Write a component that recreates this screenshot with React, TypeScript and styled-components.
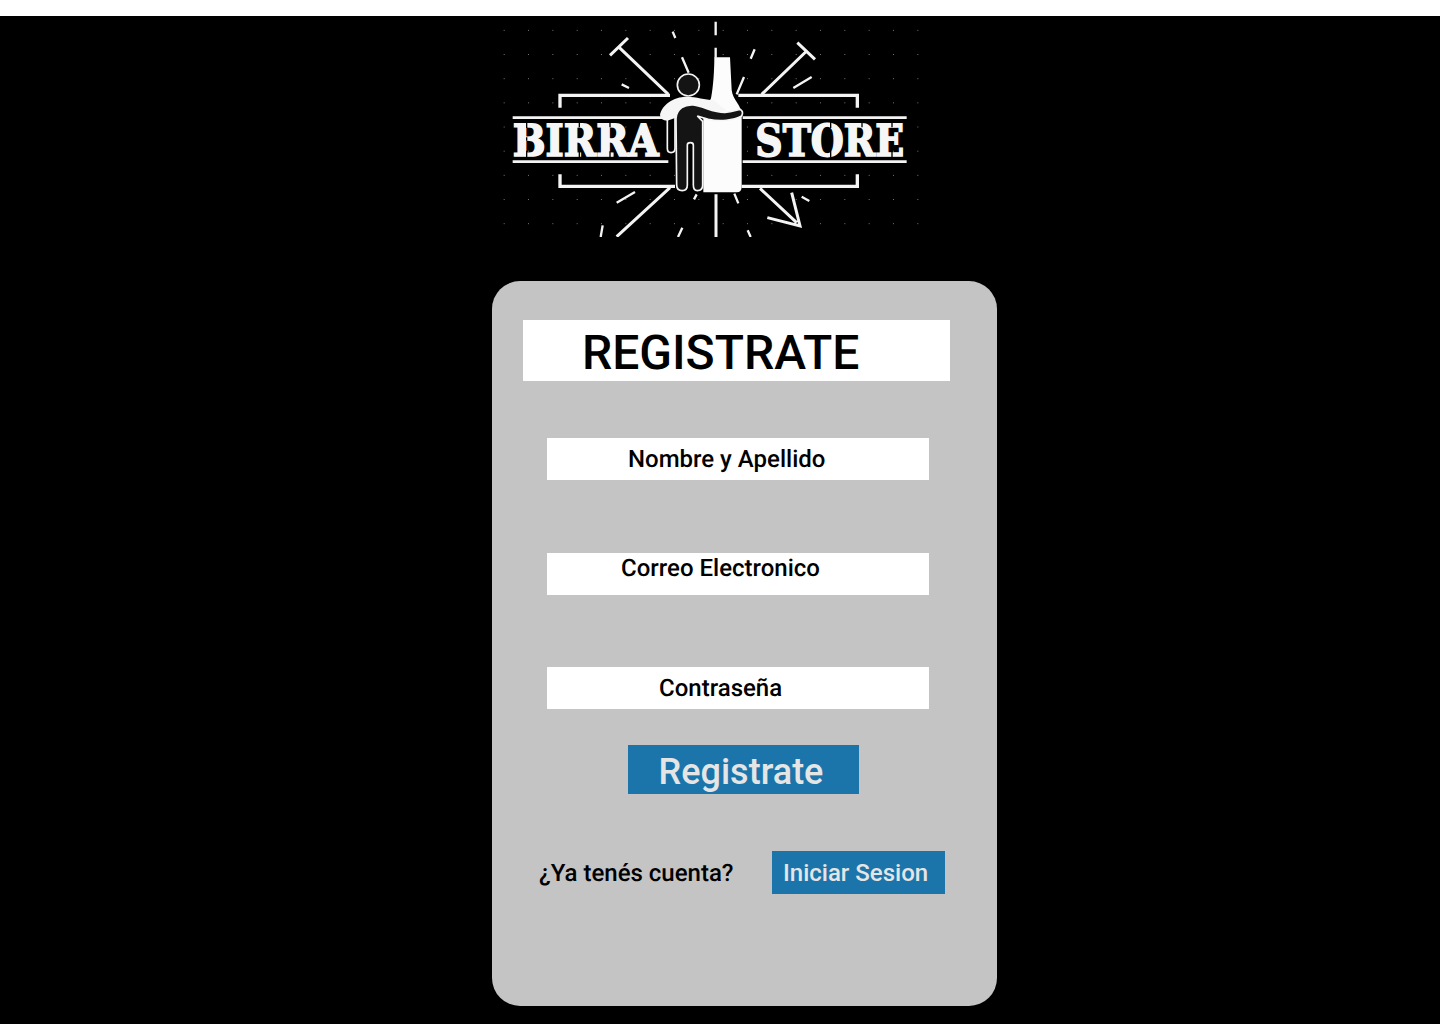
import styled, { createGlobalStyle } from "styled-components";

const GlobalStyle = createGlobalStyle`
  html, body {
    margin: 0;
    padding: 0;
    background: #fff;
    font-family: Roboto, "Liberation Sans", sans-serif;
    text-rendering: geometricPrecision;
  }
`;

function Logo() {
  return (
    <LogoSvg viewBox="0 0 1260 663" role="img" aria-label="Birra Store">
      <defs>
        <pattern id="dots" width="73" height="72.5" patternUnits="userSpaceOnUse" x="-59" y="-28">
          <rect x="70" y="70" width="3" height="3" fill="#8a8a8a" />
        </pattern>
      </defs>
      <rect width="1260" height="663" fill="url(#dots)" />

      <g stroke="#f4f4f4" strokeWidth="7" fill="none">
        <path d="M647 17V58M647 95V125M518 47L526 66M546 124L566 170M764 100L752 128M732 183L710 235" />
        <path d="M355 92L505 235M330 118L384 66M920 105L785 235M892 80L945 130" strokeWidth="9" />
        <path d="M365 205L387 216M880 216L935 183" />
        <path d="M180 275V238H510M715 238H1072V275M180 475V511H525M725 511H1072V475" strokeWidth="10" />
        <path d="M350 560L405 528M308 628L302 663M547 635L534 663M590 535L582 550M703 533L715 562M743 643L752 663M905 542L928 555" />
        <path d="M510 515L350 662M648 535V663M780 517L890 620M875 530L900 630L802 605" strokeWidth="9" />
        <path d="M38 305H505M728 305H1220M38 437H505M728 437H1220" strokeWidth="8" />
      </g>

      <StencilText transform="translate(38 419) scale(0.885 1)">BIRRA</StencilText>
      <StencilText transform="translate(766 419) scale(0.86 1)">STORE</StencilText>
      {/* stencil bridges cut through the letters */}
      <path
        d="M80 318V336M80 404V424M80 364V374M238 318V334M238 406V424M330 318V334M330 406V424
           M992 318V336M992 404V424M1086 318V334M1086 406V424M1176 318V334M1176 406V424"
        stroke="#000"
        strokeWidth="4"
        fill="none"
      />

      <g transform="translate(450 102)">
        {/* bottle */}
        <path
          d="M193 22H240L245 120C248 150 275 165 275 195V410Q275 427 260 427H160V190L183 145C190 110 193 60 193 22Z"
          fill="#fcfcfc"
        />
        {/* hanging arm */}
        <path d="M52 205V295Q52 308 63 308Q75 308 75 295V195" fill="#000" stroke="#f6f6f6" strokeWidth="5" />
        {/* shoulder */}
        <path
          d="M30 195C35 165 70 140 110 140C140 140 165 150 190 150L230 182L100 195L52 212Q32 212 30 195Z"
          fill="#f6f6f6"
        />
        {/* head */}
        <circle cx="115" cy="105" r="33" fill="#141414" stroke="#f4f4f4" strokeWidth="5" />
        {/* body and arm round the bottle */}
        <path
          d="M78 205C80 175 105 163 130 165C165 170 190 188 225 187C245 186 260 180 270 178Q282 185 275 198C250 212 210 215 175 208L142 198L158 214V405Q158 422 142 422Q130 422 130 405V285Q130 278 121 278Q112 278 112 285V405Q112 422 97 422Q80 422 80 405Z"
          fill="#141414"
          stroke="#f6f6f6"
          strokeWidth="5"
        />
      </g>
    </LogoSvg>
  );
}

export default function App() {
  return (
    <Page>
      <GlobalStyle />
      <Logo />
      <Card>
        <TitleBox>
          <Title>REGISTRATE</Title>
        </TitleBox>
        <Fields>
          <Field $indent={81}>Nombre y Apellido</Field>
          <Field $indent={74} $raised>
            Correo Electronico
          </Field>
          <Field $indent={112}>Contraseña</Field>
        </Fields>
        <RegisterButton>Registrate</RegisterButton>
        <LoginRow>
          <LoginText>¿Ya tenés cuenta?</LoginText>
          <LoginButton>Iniciar Sesion</LoginButton>
        </LoginRow>
      </Card>
    </Page>
  );
}

const Page = styled.main`
  box-sizing: border-box;
  margin-top: 16px;
  height: 1008px;
  padding-left: 492px;
  background: #000;
  overflow: hidden;
`;

const LogoSvg = styled.svg`
  display: block;
  width: 420px;
  height: 221px;
  margin-left: 8px;
`;

const StencilText = styled.text`
  font-family: "DejaVu Serif", "Liberation Serif", serif;
  font-size: 132px;
  font-weight: 700;
  fill: #f6f6f6;
  stroke: #f6f6f6;
  stroke-width: 5px;
`;

const Card = styled.section`
  box-sizing: border-box;
  width: 505px;
  height: 725px;
  margin-top: 44px;
  padding: 39px 0 0 31px;
  background: #c4c4c4;
  border-radius: 28px;
  color: #000;
`;

const TitleBox = styled.div`
  box-sizing: border-box;
  width: 427px;
  height: 61px;
  padding-left: 59px;
  background: #fff;
`;

const Title = styled.h1`
  margin: 0;
  font-size: 48px;
  font-weight: 500;
  line-height: 66px;
`;

const Fields = styled.div`
  display: flex;
  flex-direction: column;
  gap: 72.5px;
  margin: 57px 0 0 24px;
`;

const Field = styled.div<{ $indent: number; $raised?: boolean }>`
  box-sizing: border-box;
  width: 382px;
  height: 42px;
  padding-left: ${(p) => p.$indent}px;
  background: #fff;
  font-size: 24px;
  font-weight: 500;
  line-height: ${(p) => (p.$raised ? "30px" : "42px")};
`;

const RegisterButton = styled.button`
  display: block;
  width: 231px;
  height: 49px;
  margin: 36px 0 0 105px;
  padding: 6px 5px 0 0;
  border: 0;
  border-radius: 0;
  background: #1b75ab;
  color: #e5e5e5;
  font-family: inherit;
  font-size: 36px;
  font-weight: 500;
  line-height: 43px;
`;

const LoginRow = styled.div`
  display: flex;
  align-items: center;
  margin: 57px 0 0 16px;
`;

const LoginText = styled.span`
  width: 233px;
  font-size: 24px;
  font-weight: 500;
`;

const LoginButton = styled.button`
  width: 173px;
  height: 43px;
  padding: 0 0 0 11px;
  border: 0;
  border-radius: 0;
  background: #1b75ab;
  color: #e5e5e5;
  font-family: inherit;
  font-size: 24px;
  font-weight: 500;
  text-align: left;
`;
